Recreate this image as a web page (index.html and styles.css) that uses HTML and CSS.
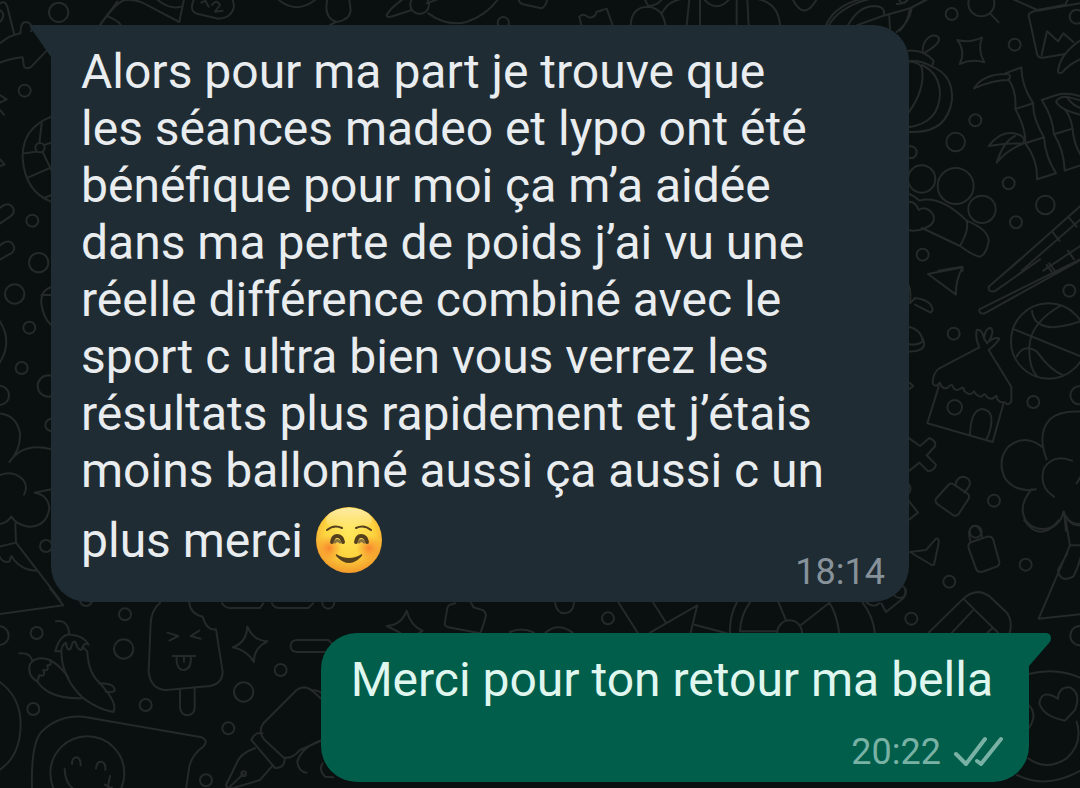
FILE: index.html
```html
<!DOCTYPE html>
<html lang="fr">
<head>
  <meta charset="UTF-8">
  <meta name="viewport" content="width=device-width, initial-scale=1.0">
  <title>Discussion</title>
  <link rel="stylesheet" href="styles.css">
</head>
<body>
  <!-- Doodle wallpaper -->
  <svg class="wallpaper" viewBox="0 0 1080 788" preserveAspectRatio="xMinYMin slice" aria-hidden="true">
    <!-- right, top -->
    <g transform="translate(900 0) scale(.3333)">
      <circle cx="155" cy="42" r="18"/>
      <circle cx="244" cy="10" r="39"/>
      <path d="M270 40L296 67"/>
      <path d="M172 120Q210 130 246 112Q232 150 253 187Q215 176 179 192Q198 155 172 120Z"/>
      <circle cx="344" cy="134" r="18"/>
      <path d="M340 -2L412 30L496 14L505 -5M412 30L392 38Q384 42 387 52L412 165Q416 174 428 173L496 162M540 10L412 32"/>
      <path d="M425 165L441 94L474 124L490 100L520 126"/>
      <circle cx="530" cy="50" r="21"/>
      <path d="M545 118Q480 160 474 214Q474 222 486 218Q510 190 545 176"/>
      <path d="M0 92Q22 70 30 25L82 -2M-10 12Q20 12 26 -5"/>
      <path d="M68 152Q68 120 95 107Q122 105 116 124Q104 142 74 158M24 152Q70 148 101 182L96 200Q60 178 24 184"/>
      <path d="M24 184Q60 186 66 205Q76 270 24 340M66 195Q118 220 120 280Q118 370 24 382M96 200Q160 225 156 300Q140 405 24 395"/>
      <path d="M222 265Q250 220 325 222Q335 230 325 240Q280 240 222 265Z"/>
      <path d="M316 220L364 202Q365 260 400 310L346 327Q350 270 325 238M400 310Q396 350 432 412L376 430Q378 385 346 327M432 412Q436 470 468 520L411 538Q414 480 376 430"/>
      <path d="M266 438Q310 380 365 408Q378 418 368 430Q320 430 266 438ZM290 488Q310 425 345 408M290 488Q320 450 372 430"/>
      <path d="M425 300L470 285Q500 276 545 290M425 300Q458 350 462 403L518 386Q510 340 490 325M545 345Q480 330 468 305Q475 290 500 290L545 302M500 290Q520 320 545 325M462 403Q492 450 494 512L545 495M518 386Q520 430 545 470"/>
      <circle cx="226" cy="361" r="18"/>
      <circle cx="167" cy="426" r="28"/>
      <circle cx="32" cy="457" r="18"/>
      <circle cx="65" cy="537" r="41"/>
      <circle cx="167" cy="558" r="54"/>
      <circle cx="246" cy="628" r="41"/>
      <circle cx="326" cy="550" r="18"/>
      <circle cx="436" cy="615" r="28"/>
      <circle cx="348" cy="667" r="18"/>
      <circle cx="68" cy="764" r="18"/>
      <path d="M24 580Q45 588 58 602Q120 585 200 662Q208 690 180 738L66 684M200 662Q268 690 266 725Q258 765 240 770Q225 770 180 738M24 606Q45 602 56 630Q80 615 100 645Q108 672 76 684Q50 696 24 690"/>
      <path d="M325 810L545 615M365 812L545 655M430 812L545 735M456 694L478 722M506 652L530 680M440 795L455 815M504 752L522 778"/>
      <path d="M115 812L186 800L188 812"/>
    </g>
    <!-- right, middle -->
    <g transform="translate(900 260) scale(.3333)">
      <path d="M84 42L188 22Q166 62 168 104Z"/>
      <path d="M360 -2L266 80Q264 98 284 94L420 -2M540 -2L238 148Q236 164 254 160L545 -2M448 10L468 38"/>
      <circle cx="508" cy="92" r="18"/>
      <circle cx="446" cy="243" r="113"/>
      <path d="M342 208L540 288M480 138Q390 190 388 262Q386 320 410 348M396 152Q400 200 460 202Q510 196 540 184M350 290Q370 250 410 274Q450 330 490 346"/>
      <circle cx="161" cy="221" r="18"/>
      <path d="M26 75Q34 95 30 130L45 114Q95 120 98 150L92 158L45 134M24 200Q65 208 68 245Q50 258 26 252M68 235Q88 275 24 275"/>
      <path d="M238 262Q225 235 230 210Q245 205 252 235Q255 205 272 203Q285 215 266 245Q285 230 298 236Q290 250 266 270M252 235L262 250"/>
      <path d="M238 262L118 325Q98 340 98 370Q108 385 120 368Q125 388 142 384Q155 370 158 378Q165 398 185 384Q190 378 192 392Q210 412 222 394Q228 408 245 410Q256 396 258 408Q270 422 284 412Q290 400 292 418Q304 432 314 426Q324 440 334 425V380L266 270"/>
      <path d="M116 380L82 490L278 546L310 432M210 526Q212 450 246 447Q278 450 274 490Q270 520 258 540"/>
      <circle cx="164" cy="442" r="22"/>
      <circle cx="400" cy="426" r="18"/>
      <circle cx="538" cy="406" r="27"/>
      <path d="M24 532L60 558L88 534Q108 542 106 558L80 586L108 614Q104 632 84 634L58 608L26 634M24 365L40 378L24 390"/>
      <path d="M440 598Q410 520 450 478Q480 450 545 455M425 560Q375 520 325 560Q290 600 315 655Q350 700 408 688M516 602Q460 580 432 625Q415 680 462 710M395 688Q350 740 380 785Q410 820 460 800Q485 785 490 755Q510 800 545 790M492 755L498 812M545 645L530 670"/>
      <path d="M148 672Q156 668 162 674L202 700Q210 708 206 716L176 762Q168 770 160 766L112 732Q102 722 110 714ZM166 676Q170 650 190 650Q215 655 208 678L194 698"/>
      <circle cx="282" cy="722" r="18"/>
      <circle cx="227" cy="815" r="18"/>
      <path d="M24 720L54 758L26 780M24 670Q38 685 26 700"/>
    </g>
    <!-- right, bottom -->
    <g transform="translate(900 520) scale(.3333)">
      <path d="M30 96L78 90L108 56Q118 54 116 70L102 134Q98 138 90 132Z"/>
      <path d="M215 66L262 50Q276 48 280 60L298 125Q300 135 290 140L245 156Q232 158 228 146L206 85Q202 70 215 66ZM212 66Q200 30 218 18Q240 14 246 50"/>
      <circle cx="377" cy="134" r="18"/>
      <circle cx="148" cy="185" r="18"/>
      <circle cx="34" cy="296" r="18"/>
      <circle cx="-1" cy="215" r="19"/>
      <path d="M372 0Q420 70 478 0M496 -5L510 76L416 296L545 282M510 76H545M502 100L474 150Q480 190 520 170Q536 140 545 100M504 0Q520 20 545 16"/>
      <path d="M86 338L190 236Q230 200 270 230L322 280Q340 310 328 342M190 236L294 338M156 338L218 272M262 338L278 324"/>
      <circle cx="540" cy="347" r="29"/>
      <path d="M386 462Q470 440 545 475M384 715Q440 755 500 715Q550 670 530 605M350 765Q440 810 545 750M386 555Q415 585 386 625"/>
      <path d="M474 536Q476 500 510 502Q545 520 525 570L495 602Q430 590 418 550Q425 505 474 536Z"/>
    </g>
    <!-- left, bottom -->
    <g transform="translate(0 590) scale(.3333)">
      <path d="M150 -5L190 46L0 72"/>
      <circle cx="110" cy="129" r="18"/>
      <circle cx="-2" cy="137" r="28"/>
      <circle cx="375" cy="73" r="18"/>
      <circle cx="371" cy="177" r="29"/>
      <circle cx="437" cy="345" r="18"/>
      <circle cx="100" cy="357" r="18"/>
      <circle cx="842" cy="240" r="18"/>
      <circle cx="731" cy="306" r="29"/>
      <circle cx="685" cy="415" r="18"/>
      <circle cx="618" cy="571" r="18"/>
      <circle cx="985" cy="38" r="18"/>
      <circle cx="258" cy="30" r="18"/>
      <path d="M168 94Q205 88 208 134M166 184Q180 130 215 134Q252 138 266 164Q250 155 246 178Q235 185 226 156Q218 150 212 176Q200 185 198 158Q185 165 184 184ZM184 184Q185 265 250 325Q300 360 340 366Q355 340 300 280Q265 250 262 185L250 172"/>
      <path d="M58 190Q90 188 96 210M112 275Q80 255 90 222Q110 195 150 210Q158 226 142 226Q148 245 130 240Q138 262 118 256ZM112 275Q150 330 250 324M150 210Q180 226 205 262M298 280Q345 280 344 302Q335 310 316 304"/>
      <path d="M480 38Q454 60 452 100L446 245Q452 300 500 300L630 288Q668 280 668 245L648 118Q620 122 608 80Q570 70 568 38"/>
      <path d="M502 128L535 138L508 152M598 122L572 138L602 146M518 198H586M530 200Q528 240 552 240Q576 236 572 198M552 200V215M540 296V355Q545 376 562 376Q582 374 584 355V292"/>
      <path d="M742 110Q760 152 802 154Q760 175 762 216Q740 180 698 172Q740 158 742 110Z"/>
      <path d="M666 40Q675 54 690 54H780L790 40M816 40Q822 54 840 54H925L940 40"/>
      <path d="M998 186H890Q870 184 872 166Q874 150 892 150H985L998 162"/>
      <path d="M-2 275Q62 320 62 405Q60 500 -2 540"/>
      <path d="M96 598Q92 450 130 420Q180 375 250 380L605 442Q625 450 612 468Q575 495 568 530L558 598"/>
      <circle cx="262" cy="550" r="111"/>
      <path d="M216 522Q216 502 230 502Q242 504 242 526M288 535Q290 514 304 515Q318 518 316 540M194 536Q195 580 222 598M330 558L322 598M314 584L336 594"/>
      <path d="M790 400Q770 430 800 455L850 502Q875 510 900 480L968 450M790 400L890 300Q915 282 940 305L968 330M935 300Q955 300 968 312M788 430Q765 425 754 450L825 534Q855 535 854 505M765 475Q720 490 710 520L678 585Q680 598 700 594L780 570L815 530M690 590L730 552M968 450Q905 470 892 515Q895 545 920 548M968 520Q955 540 975 560L1000 562"/>
      <circle cx="731" cy="551" r="7"/>
    </g>
    <!-- left, top -->
    <g transform="scale(.3333)">
      <circle cx="176" cy="37" r="29"/>
      <path d="M0 10Q15 0 22 20L42 100M0 130Q30 105 62 100Q60 65 80 66Q100 72 94 94M0 188Q30 176 68 172L72 200Q80 210 94 200L140 152M0 30Q20 45 0 65"/>
      <circle cx="74" cy="272" r="18"/>
      <path d="M154 350Q65 385 68 475Q75 575 154 605M125 370L118 430M132 435L154 428M108 455L74 460M128 456L154 510M85 532L154 502M130 595L154 585M0 285L20 298L0 308M0 330L12 345M0 478L14 494L0 498"/>
      <circle cx="120" cy="443" r="14"/>
      <path d="M-2 625Q25 600 40 625Q45 640 30 650L-2 672M-2 738Q30 710 42 740Q45 755 30 762L-2 780"/>
      <circle cx="97" cy="662" r="18"/>
      <circle cx="116" cy="788" r="29"/>
      <circle cx="44" cy="882" r="29"/>
      <path d="M154 862Q122 870 124 910Q130 955 154 975M124 885H154M300 75L352 5M325 50Q350 60 362 74"/>
    </g>
    <!-- left, middle -->
    <g transform="translate(0 290) scale(.3333)">
      <path d="M-2 92Q40 155 -2 220"/>
      <circle cx="88" cy="113" r="18"/>
      <circle cx="65" cy="234" r="18"/>
      <circle cx="-2" cy="316" r="29"/>
      <circle cx="145" cy="288" r="32"/>
      <circle cx="154" cy="405" r="18"/>
      <circle cx="138" cy="768" r="18"/>
      <path d="M-2 370Q50 375 60 430Q62 480 28 516Q70 455 154 478M-2 556Q40 538 70 570Q85 590 72 614M154 598L104 608Q145 615 148 655Q140 710 85 710Q50 705 34 680Q20 700 -2 702M46 700L48 758L180 930M48 758L-2 770M-2 800Q10 820 28 815L34 798Q60 840 108 842"/>
    </g>
    <!-- top edge -->
    <g transform="translate(100 0) scale(.3333)">
      <path d="M0 75Q50 5 75 0Q110 -5 150 20L238 66L252 -2M170 -2Q210 30 242 20"/>
      <path d="M282 -2Q265 35 295 42L355 56Q395 55 402 20L398 -5M304 8L316 2L326 20M336 15Q350 -5 360 15L345 35L368 32"/>
      <path d="M534 -2Q590 45 648 -2M682 -2Q670 55 710 66Q750 60 752 30L748 -2M690 75L708 66"/>
      <path d="M908 -2Q870 25 860 45Q860 55 880 48L935 30M985 40Q1040 80 1100 66Q1160 45 1194 -2M980 10L1012 -2"/>
      <circle cx="959" cy="14" r="28"/>
      <circle cx="1210" cy="68" r="17"/>
      <path d="M1256 -2Q1258 12 1275 14L1325 25Q1336 22 1342 -2M1445 78L1438 50Q1450 38 1465 52Q1485 55 1490 35L1505 32"/>
    </g>
    <g transform="translate(600 0) scale(.3333)">
      <path d="M0 32L20 26L38 76M92 76Q95 20 145 20Q190 25 196 76M134 -2L145 18Q170 18 186 -2M186 38Q205 5 240 -2M260 76L268 -2M300 76V-2M312 -2Q350 40 388 -2M410 76V-2M446 76L442 -2M476 -2Q535 10 540 76M578 -2Q612 65 650 -2"/>
      <path d="M676 80Q700 20 780 -2M686 76Q720 20 805 -2M744 76Q775 20 820 18Q855 18 852 42M770 76Q850 45 930 25L980 -2M868 48L870 90M935 25Q930 65 890 96M896 -2Q910 20 922 -2"/>
    </g>
    <!-- between the messages -->
    <g transform="translate(340 590) scale(.3333)">
      <path d="M200 62Q212 108 248 122L235 130M200 62Q185 105 140 108L180 128"/>
      <path d="M346 40L330 44Q324 46 322 55L314 100Q314 110 325 112L420 130Q430 110 438 75Q435 60 420 58L400 52Q398 45 392 38"/>
      <path d="M645 38Q650 70 674 70Q700 68 702 38M510 126Q545 110 582 128M616 128Q655 95 698 128"/>
      <circle cx="804" cy="85" r="18"/>
      <path d="M836 38L894 130M940 38L978 98M930 128L1072 46L1052 128M1064 104L1160 130M1190 38Q1168 80 1170 130M1230 38Q1202 75 1200 124H1310M1316 38L1338 90M1384 104L1468 38Q1490 70 1498 130M1568 38Q1600 80 1605 130"/>
      <circle cx="1349" cy="128" r="37"/>
      <path d="M1580 38Q1602 55 1618 40M1624 40L1638 66L1690 25Q1700 10 1695 -5"/>
    </g>
  </svg>

  <main class="chat">
    <article class="message incoming">
      <svg class="tail" viewBox="0 0 22 34" aria-hidden="true"><path d="M22 0H2Q0 0 1 2L22 32Z"/></svg>
      <p class="text">
        Alors pour ma part je trouve que<br>
        les séances madeo et lypo ont été<br>
        bénéfique pour moi ça m’a aidée<br>
        dans ma perte de poids j’ai vu une<br>
        réelle différence combiné avec le<br>
        sport c ultra bien vous verrez les<br>
        résultats plus rapidement et j’étais<br>
        moins ballonné aussi ça aussi c un<br>
        plus merci
        <svg class="emoji" viewBox="0 0 68 68" role="img" aria-label="Visage souriant">
          <defs>
            <radialGradient id="face" cx=".5" cy=".38" r=".62">
              <stop offset="0" stop-color="#ffe95c"/>
              <stop offset=".6" stop-color="#fdd43f"/>
              <stop offset="1" stop-color="#f29a2a"/>
            </radialGradient>
            <radialGradient id="cheek">
              <stop offset="0" stop-color="#f8782c" stop-opacity=".85"/>
              <stop offset="1" stop-color="#f8912c" stop-opacity="0"/>
            </radialGradient>
            <linearGradient id="shine" x2="0" y2="1">
              <stop offset="0" stop-color="#fff3c4" stop-opacity=".75"/>
              <stop offset="1" stop-color="#fff3c4" stop-opacity="0"/>
            </linearGradient>
          </defs>
          <circle cx="34" cy="34" r="33" fill="url(#face)"/>
          <ellipse cx="34" cy="14" rx="23" ry="12" fill="url(#shine)"/>
          <circle cx="14" cy="42" r="13" fill="url(#cheek)"/>
          <circle cx="54" cy="42" r="13" fill="url(#cheek)"/>
          <g fill="none" stroke="#54401c" stroke-linecap="round">
            <path d="M12 24Q19 18 27 22M41 22Q49 18 56 24" stroke-width="2"/>
            <path d="M17 36Q18 30 22 30Q27 30 28 36M41 36Q42 30 46 30Q51 30 52 36" stroke-width="4"/>
            <path d="M20 36Q22 33 25 36M44 36Q46 33 49 36" stroke="#8a7440" stroke-width="3"/>
          </g>
          <path d="M21 48Q34 56 47 48Q48 49 46 51Q34 63 22 51Q20 49 21 48Z" fill="#54401c"/>
        </svg>
      </p>
      <footer class="meta"><time datetime="18:14">18:14</time></footer>
    </article>

    <article class="message outgoing">
      <svg class="tail" viewBox="0 0 22 34" aria-hidden="true"><path d="M0 0H16Q22 0 22 5Q22 8 20 10L0 33Z"/></svg>
      <p class="text">Merci pour ton retour ma bella</p>
      <footer class="meta">
        <time datetime="20:22">20:22</time>
        <svg class="ticks" viewBox="0 0 50 32" role="img" aria-label="Distribué">
          <path d="M3 18L13 28L32 3M24 25L28 28L48 3"/>
        </svg>
      </footer>
    </article>
  </main>
</body>
</html>
```

FILE: styles.css
```css
:root {
  --wallpaper: #09100f;
  --doodle: #252929;
  --incoming: #202c33;
  --outgoing: #005e4b;
  --text: #e9edef;
}

* {
  margin: 0;
  padding: 0;
  box-sizing: border-box;
}

body {
  min-height: 100vh;
  overflow: hidden;
  background: var(--wallpaper);
  color: var(--text);
  font-family: Roboto, "Liberation Sans", sans-serif;
}

.wallpaper {
  position: absolute;
  inset: 0;
  width: 100%;
  height: 100%;
  fill: none;
  stroke: var(--doodle);
  stroke-width: 6;
  stroke-linecap: round;
  stroke-linejoin: round;
}

.chat {
  position: relative;
  display: flex;
  flex-direction: column;
  gap: 31px;
  padding: 25px 51px 0;
}

.message {
  position: relative;
  display: flex;
  flex-direction: column;
}

.incoming {
  margin-right: 120px;
  padding: 18px 24px 10px 30px;
  background: var(--incoming);
  border-radius: 0 36px 36px 36px;
}

.outgoing {
  align-self: flex-end;
  padding: 18px 36px 10px 30px;
  background: var(--outgoing);
  border-radius: 36px 0 36px 36px;
  color: #e0f7f0;
}

.text {
  font-size: 48px;
  line-height: 57px;
}

.emoji {
  width: 68px;
  height: 68px;
  margin-top: 7px;
  vertical-align: -17px;
}

.meta {
  display: flex;
  align-items: center;
  justify-content: flex-end;
  gap: 12px;
  color: #87929a;
  font-size: 36px;
  line-height: 40px;
}

.incoming .meta {
  margin-top: -22px;
}

.outgoing .meta {
  margin: 24px -10px 0 0;
  color: #79b1a5;
}

.tail {
  position: absolute;
  top: 0;
  width: 22px;
  height: 34px;
}

.incoming .tail {
  right: 100%;
  fill: var(--incoming);
}

.outgoing .tail {
  left: 100%;
  fill: var(--outgoing);
}

.ticks {
  width: 50px;
  height: 32px;
  fill: none;
  stroke: currentColor;
  stroke-width: 4;
  stroke-linecap: round;
  stroke-linejoin: round;
}
```
